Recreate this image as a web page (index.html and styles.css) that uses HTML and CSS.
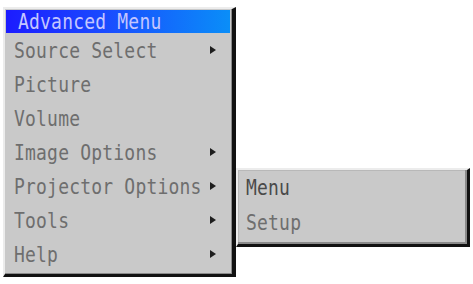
FILE: index.html
```html
<!DOCTYPE html>
<html>
<head>
<meta charset="utf-8">
<link rel="stylesheet" href="styles.css">
</head>
<body>
<div class="wrap">
  <div class="menu">
    <div class="title"><span class="txt">Advanced Menu</span></div>
    <div class="row"><span class="txt">Source Select</span><span class="arrow"></span></div>
    <div class="row"><span class="txt">Picture</span></div>
    <div class="row"><span class="txt">Volume</span></div>
    <div class="row"><span class="txt">Image Options</span><span class="arrow"></span></div>
    <div class="row"><span class="txt">Projector Options</span><span class="arrow"></span></div>
    <div class="row"><span class="txt">Tools</span><span class="arrow"></span></div>
    <div class="row"><span class="txt">Help</span><span class="arrow"></span></div>
  </div>
  <div class="submenu">
    <div class="subrow active"><span class="txt">Menu</span></div>
    <div class="subrow"><span class="txt">Setup</span></div>
  </div>
</div>
</body>
</html>
```
FILE: styles.css
```css
html, body {
  margin: 0;
  padding: 0;
  background: #ffffff;
}
body {
  width: 473px;
  height: 284px;
  overflow: hidden;
  font-family: "DejaVu Sans Mono", "Liberation Mono", monospace;
  font-size: 18px;
  letter-spacing: 0.2px;
  color: #6e6e6e;
}
.wrap {
  display: flex;
  align-items: flex-start;
  padding-left: 3px;
}
.menu {
  margin-top: 7px;
  width: 224px;
  background: #c9c9c9;
  border-top: 2px solid #ececec;
  border-left: 2px solid #ececec;
  border-right: 4px solid #111;
  border-bottom: 3px solid #111;
  padding: 1px 2px 3px 1px;
  box-shadow: inset -1px -1px 0 #8a8a8a;
}
.title {
  height: 23px;
  display: flex;
  align-items: center;
  padding-left: 12px;
  background: linear-gradient(to right, #1c1cff 0%, #1a4cff 45%, #0a8ef8 100%);
  color: #c4c6ff;
}
.row {
  height: 34px;
  display: flex;
  align-items: center;
  padding-left: 8px;
  padding-right: 14px;
}
.txt {
  display: inline-block;
  transform: scaleY(1.15);
  white-space: nowrap;
}
.arrow {
  margin-left: auto;
  width: 0;
  height: 0;
  border-top: 4.5px solid transparent;
  border-bottom: 4.5px solid transparent;
  border-left: 6px solid #1e1e1e;
}
.submenu {
  margin-top: 168px;
  width: 229px;
  background: #c9c9c9;
  border-top: 2px solid #ececec;
  border-left: 2px solid #ececec;
  border-right: 3px solid #111;
  border-bottom: 3px solid #111;
  padding: 0 0 4px 0;
  box-shadow: inset -2px -2px 0 #8a8a8a, inset 1px 1px 0 #b8b8b8;
}
.subrow {
  height: 35px;
  display: flex;
  align-items: center;
  padding-left: 8px;
}
.subrow.active {
  color: #4a4a4a;
}
```
